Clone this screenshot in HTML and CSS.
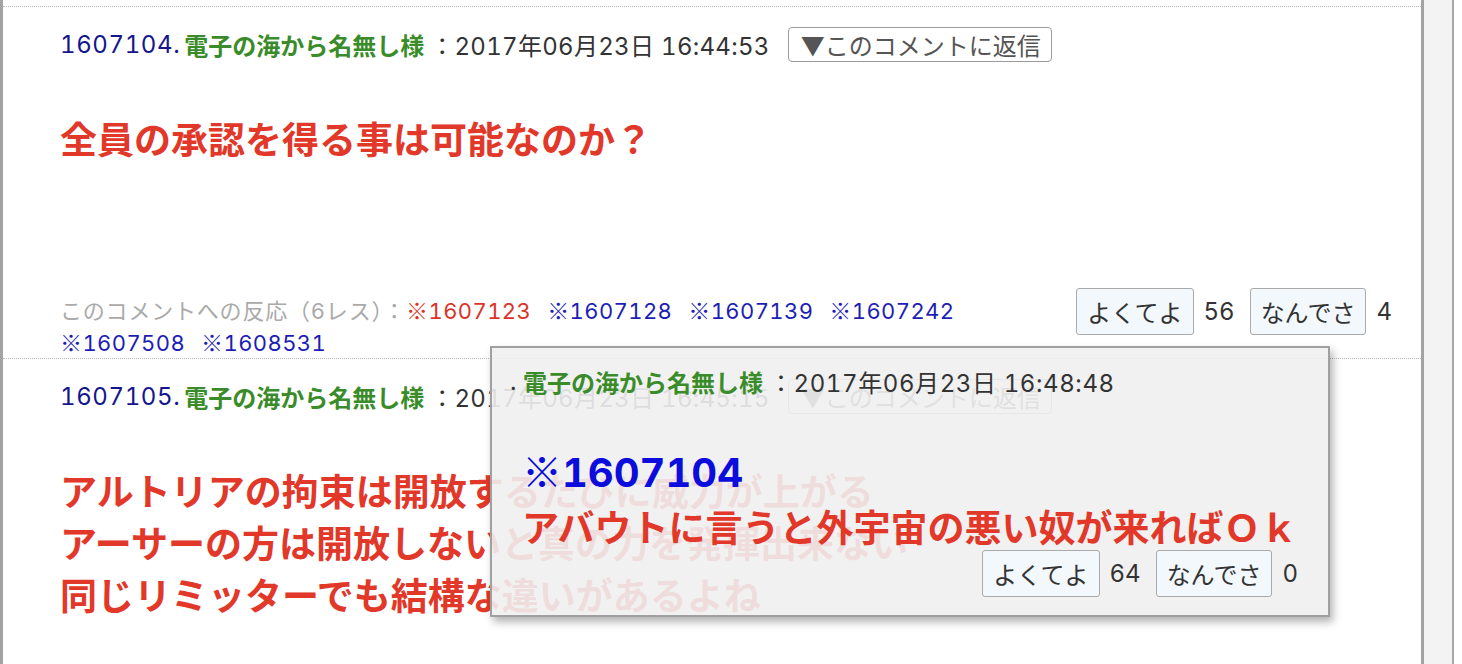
FILE: index.html
```html
<!DOCTYPE html>
<html lang="ja">
<head>
<meta charset="utf-8">
<title>comments</title>
<link rel="stylesheet" href="styles.css">
</head>
<body>
<div class="page">
  <div class="main">
    <div class="comment">
      <div class="head">
        <span class="num">1607104.</span>
        <span class="name">電子の海から名無し様</span>
        <span class="date">：2017年06月23日 16:44:53</span>
        <span class="reply">▼このコメントに返信</span>
      </div>
      <div class="body body-short">全員の承認を得る事は可能なのか？</div>
      <div class="foot">
        <div class="reacts"><span class="label">このコメントへの反応（6レス）：</span><a class="ref ref-red"><span class="kome">※</span>1607123</a><a class="ref"><span class="kome">※</span>1607128</a><a class="ref"><span class="kome">※</span>1607139</a><a class="ref"><span class="kome">※</span>1607242</a><a class="ref"><span class="kome">※</span>1607508</a><a class="ref"><span class="kome">※</span>1608531</a></div>
        <div class="votes">
          <span class="vote">よくてよ</span><span class="count">56</span>
          <span class="vote">なんでさ</span><span class="count">4</span>
        </div>
      </div>
    </div>
    <div class="comment">
      <div class="head">
        <span class="num">1607105.</span>
        <span class="name">電子の海から名無し様</span>
        <span class="date">：2017年06月23日 16:45:15</span>
        <span class="reply">▼このコメントに返信</span>
      </div>
      <div class="body">アルトリアの拘束は開放するたびに威力が上がる<br>アーサーの方は開放しないと真の力を発揮出来ない<br>同じリミッターでも結構な違いがあるよね</div>
    </div>

    <div class="popup">
      <div class="head">
        <span class="dot">. </span><span class="name">電子の海から名無し様</span>
        <span class="date">：2017年06月23日 16:48:48</span>
      </div>
      <div class="pop-ref"><span class="kome">※</span>1607104</div>
      <div class="pop-text">アバウトに言うと外宇宙の悪い奴が来ればＯｋ</div>
      <div class="votes pop-votes">
        <span class="vote">よくてよ</span><span class="count">64</span>
        <span class="vote">なんでさ</span><span class="count">0</span>
      </div>
    </div>
  </div>
  <div class="side"></div>
</div>
</body>
</html>
```

FILE: styles.css
```css
html, body {
  margin: 0;
  padding: 0;
  background: #ffffff;
}

body {
  font-family: "Inter", "Noto Sans CJK JP", sans-serif;
  font-variant-numeric: tabular-nums;
  color: #333333;
  overflow: hidden;
}

.page {
  display: flex;
  height: 664px;
}

.main {
  position: relative;
  width: 1418px;
  border-left: 3px solid #a3a3a3;
  border-right: 3px solid #a3a3a3;
  padding-top: 6px;
  background: #ffffff;
}

.side {
  width: 28px;
  background: #f3f3f3;
  border-right: 2px solid #a8a8a8;
}

.comment {
  border-top: 1px dotted #b8b8b8;
  padding: 0 29px 0 57px;
}

.head {
  display: flex;
  align-items: center;
  height: 36px;
  margin-top: 19px;
  font-size: 24px;
  white-space: nowrap;
}

.num {
  color: #16168c;
  margin-right: 4px;
  letter-spacing: 0.6px;
}

.name {
  color: #3a8c2a;
  font-weight: 700;
  font-family: "Noto Sans CJK JP", sans-serif;
  margin-right: 6px;
}

.date {
  color: #333333;
  letter-spacing: 0.3px;
}

.kome {
  font-family: "Noto Sans CJK JP", sans-serif;
}

.reply {
  margin-left: 18px;
  height: 33px;
  line-height: 33px;
  padding: 0 10px 0 12px;
  border: 1px solid #9a9a9a;
  border-radius: 4px;
  color: #555555;
  font-size: 24px;
  font-family: "Noto Sans CJK JP", sans-serif;
}

.body {
  margin-top: 50px;
  font-family: "Noto Sans CJK JP", sans-serif;
  font-weight: 700;
  font-size: 37px;
  line-height: 52px;
  color: #e2382a;
  white-space: nowrap;
}

.body-short {
  padding-bottom: 124px;
}

.foot {
  display: flex;
  align-items: flex-start;
}

.reacts {
  flex: 1;
  padding-top: 6px;
  font-size: 22px;
  line-height: 30px;
}

.label {
  color: #aaaaaa;
  letter-spacing: 0.8px;
}

.ref {
  display: inline-block;
  color: #1e1eb4;
  margin-right: 16px;
  letter-spacing: 0.4px;
}

.ref-red {
  color: #dc3328;
}

.votes {
  display: flex;
  align-items: center;
  font-size: 24px;
}

.vote {
  height: 45px;
  line-height: 45px;
  padding: 0 10px;
  border: 1px solid #aaaaaa;
  border-radius: 3px;
  background: #f2f8fc;
  color: #333333;
  font-family: "Noto Sans CJK JP", sans-serif;
}

.count {
  margin: 0 15px 0 10px;
  color: #333333;
}

.votes .count:last-child {
  margin-right: 0;
}

.popup {
  position: absolute;
  left: 487px;
  top: 346px;
  box-sizing: border-box;
  width: 840px;
  height: 271px;
  border: 2px solid #a0a0a0;
  background: rgba(239, 239, 239, 0.9);
  box-shadow: 3px 5px 8px rgba(0, 0, 0, 0.3);
  padding: 0 30px 0 18px;
}

.popup .head {
  margin-top: 15px;
}

.popup .date {
  letter-spacing: 0.6px;
}

.dot {
  color: #333333;
  white-space: pre;
}

.pop-ref {
  margin-top: 47px;
  padding-left: 12px;
  font-size: 40px;
  line-height: 48px;
  font-weight: 700;
  color: #0c0cdc;
}

.pop-text {
  margin-top: 6px;
  padding-left: 12px;
  font-family: "Noto Sans CJK JP", sans-serif;
  font-weight: 700;
  font-size: 37px;
  line-height: 47px;
  color: #e2382a;
  white-space: nowrap;
}

.pop-votes {
  justify-content: flex-end;
}
```
